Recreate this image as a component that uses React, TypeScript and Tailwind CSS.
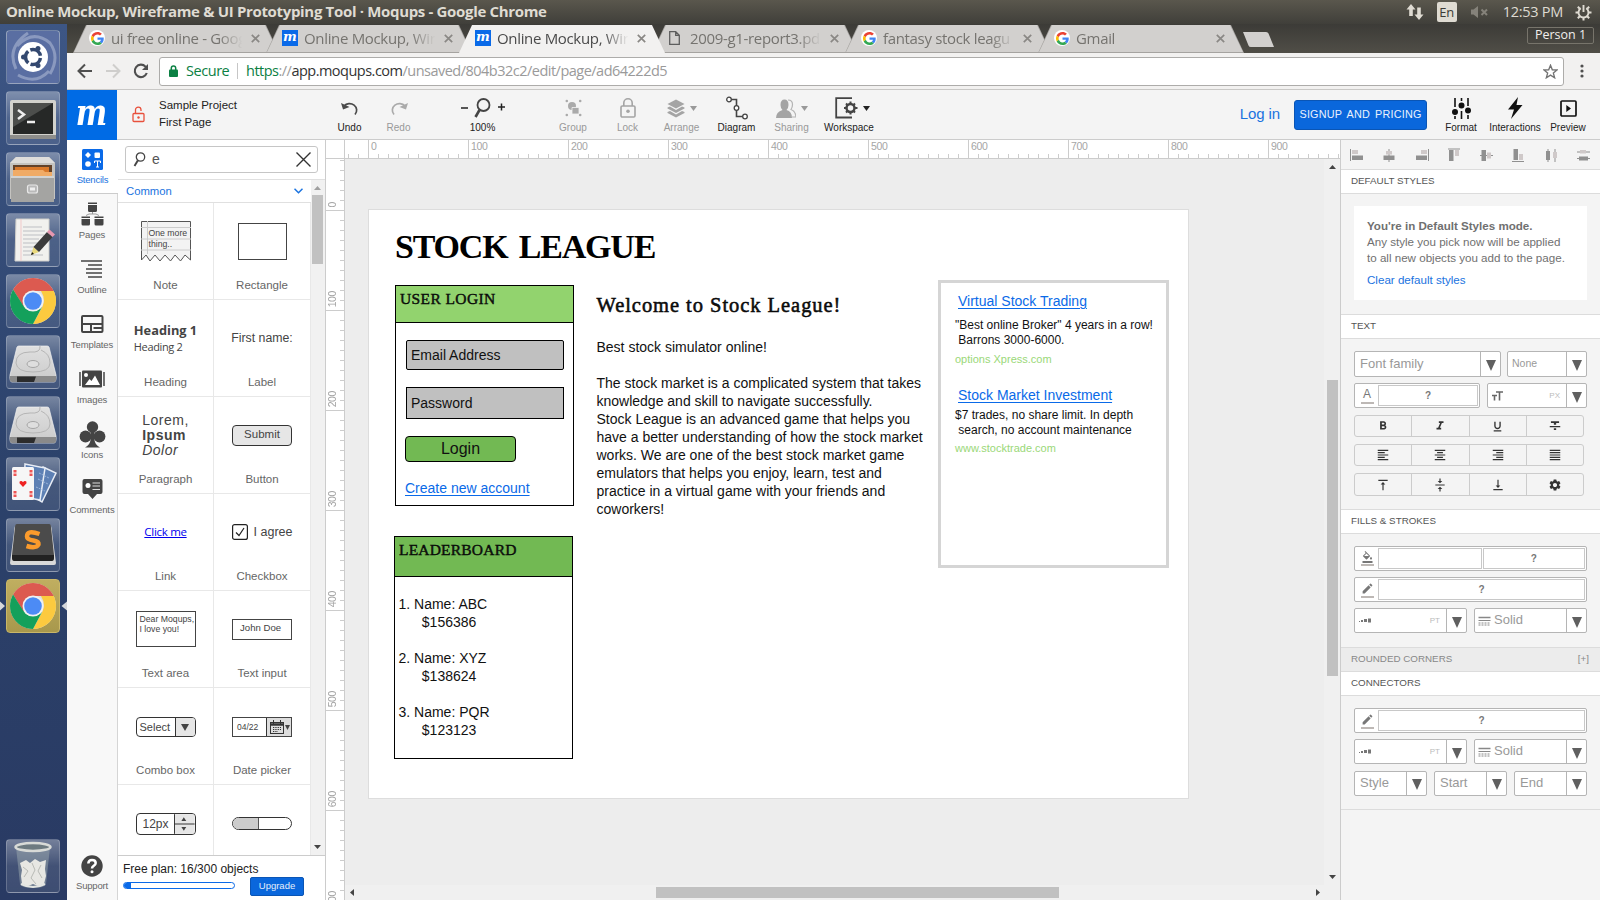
import React from "react";
import { MdSettings, MdFormatColorFill, MdEdit, MdVerticalAlignTop, MdVerticalAlignCenter, MdVerticalAlignBottom, MdFormatAlignLeft, MdFormatAlignCenter, MdFormatAlignRight, MdFormatAlignJustify, MdFormatBold, MdFormatItalic, MdFormatUnderlined, MdFormatStrikethrough } from "react-icons/md";

const ubuntu = "font-['Open_Sans','Noto_Sans',sans-serif]";

/* ---------- Desktop chrome ---------- */

function TitleBar() {
  return (
    <div className={`flex h-6 shrink-0 items-center bg-linear-to-b from-[#5a574d] to-[#403f3a] pl-1.5 pr-2 text-[#dfdbd2] ${ubuntu}`}>
      <div className="grow whitespace-nowrap pb-px text-[15px] font-bold tracking-[-0.330px]">
        Online Mockup, Wireframe &amp; UI Prototyping Tool · Moqups - Google Chrome
      </div>
      <svg className="mr-[13px] h-[18px] w-[18px]" viewBox="0 0 18 18" fill="#dfdbd2">
        <path d="M5 1L0.500 6.500H3.200V13H6.800V6.500H9.500zM13 17L8.500 11.500H11.200V4.500H14.800V11.500H17.500z" />
      </svg>
      <div className="mr-[13px] flex h-5 w-5 items-center justify-center rounded-[2px] bg-[#dfdbd2] text-[13px] leading-none text-[#3c3b37]">En</div>
      <svg className="mr-[14px] h-4 w-[19px]" viewBox="0 0 19 16" fill="#85827a">
        <path d="M1 5.500H3.500L8 2V14L3.500 10.500H1z" />
        <path d="M11.500 5.500L17 11M17 5.500L11.500 11" stroke="#85827a" strokeWidth="2" />
      </svg>
      <div className="mr-3 whitespace-nowrap text-[14.500px] tracking-[-0.280px]">12:53 PM</div>
      <svg className="h-[17px] w-[17px]" viewBox="0 0 17 17" fill="none" stroke="#dfdbd2">
        <path d="M5.800 4.300A5 5 0 1 0 11.200 4.300" strokeWidth="1.900" />
        <path d="M8.500 1V8" strokeWidth="1.900" />
        <path d="M2.800 2.800l2 2M14.200 2.800l-2 2M0.500 8.500H3.500M13.500 8.500h3M2.800 14.200l2-2M14.200 14.200l-2-2M8.500 13.500v3" strokeWidth="2" />
      </svg>
    </div>
  );
}

function Tile({ children, active }: { children: React.ReactNode; active?: boolean }) {
  return (
    <div className={`flex h-[54px] w-[54px] shrink-0 items-center justify-center rounded-[4px] border ${active ? "border-[#c9b768] bg-linear-to-b from-[#c0ae60] to-[#a8984c]" : "border-white/20 bg-linear-to-b from-white/35 via-white/12 to-white/10"}`}>
      {children}
    </div>
  );
}

function ChromeLogo() {
  return (
    <svg className="h-[48px] w-[48px]" viewBox="0 0 48 48">
      <circle cx="24" cy="24" r="23" fill="#e0e0e0" />
      <path d="M4.100 12.500A23 23 0 0 1 43.900 12.500L44.700 14H24L14.500 29.500z" fill="#dc5a50" />
      <path d="M44.700 14A23 23 0 0 1 24 47L33.500 29.500Q37 22 32 14z" fill="#fcca3f" />
      <path d="M4.100 12.500A23 23 0 0 0 24 47L33 30Q28 35.500 20 33.500Q16 32 14.500 29z" fill="#14a05b" />
      <circle cx="24" cy="24" r="10.500" fill="#f1f1f1" />
      <circle cx="24" cy="24" r="8.800" fill="#4c8bf5" />
    </svg>
  );
}

function DriveIcon() {
  return (
    <svg className="h-[48px] w-[50px]" viewBox="0 0 50 48">
      <defs>
        <linearGradient id="drive" x1="0" y1="0" x2="0" y2="1">
          <stop offset="0" stopColor="#e0e0e0" />
          <stop offset="1" stopColor="#cacaca" />
        </linearGradient>
      </defs>
      <path d="M9 9Q9.500 8 11 8H39Q40.500 8 41 9L48 37Q48.500 44 46 44H4Q1.500 44 2 37z" fill="url(#drive)" stroke="#f2f2f2" strokeWidth="0.700" />
      <path d="M2 38H48V42Q48 44 46 44H4Q2 44 2 42z" fill="#8a8a8a" />
      <path d="M9 38.500H28L26 44H9z" fill="#2c2c2c" />
      <path d="M32 8Q33 15 22 14Q8 14 8 25Q9 34 25 34Q42 34 42 25Q42 16 33 12" fill="none" stroke="#b5b5b5" />
      <ellipse cx="25" cy="26" rx="6" ry="3.500" fill="#dedede" stroke="#a5a5a5" />
    </svg>
  );
}

function Launcher() {
  return (
    <div className="relative flex w-[67px] shrink-0 flex-col gap-[7px] bg-linear-to-b from-[#3d5685] via-[#2c426b] to-[#293a63] pl-[6px] pt-1.5">
      <Tile>
        <svg className="h-[52px] w-[52px]" viewBox="0 0 52 52">
          <rect width="52" height="52" rx="3" fill="#5a6ea2" />
          <path d="M10 15Q26-2 43 12Q53 26 43 43M9 38Q-1 17 21 2M42 40Q29 54 11 44" fill="none" stroke="#b9c4dc" strokeWidth="3" opacity=".5" />
          <circle cx="26" cy="26" r="15" fill="#fff" />
          <circle cx="26" cy="26" r="7.500" fill="none" stroke="#33486f" strokeWidth="3.500" strokeDasharray="13.200 2.500" strokeDashoffset="-1" />
          <circle cx="16.500" cy="26" r="2.500" fill="#33486f" />
          <circle cx="31" cy="17.500" r="2.500" fill="#33486f" />
          <circle cx="31" cy="34.500" r="2.500" fill="#33486f" />
        </svg>
      </Tile>
      <Tile>
        <svg className="h-[46px] w-[48px]" viewBox="0 0 48 46">
          <rect x="1" y="5" width="46" height="39" rx="2" fill="#d2d2cd" />
          <rect x="1" y="40" width="46" height="4" fill="#8e8e8b" />
          <rect x="4" y="8" width="40" height="31" fill="#262827" />
          <path d="M4 8H44L4 32z" fill="#4c4e4c" />
          <path d="M9 15l6 4.500L9 24M18 27h8" fill="none" stroke="#eee" strokeWidth="2.500" />
        </svg>
      </Tile>
      <Tile>
        <svg className="h-[50px] w-[48px]" viewBox="0 0 48 50">
          <path d="M7 3H40L46 9V45H1V9z" fill="#c4c3c0" />
          <path d="M7 3H40L46 9H1z" fill="#dedddb" />
          <path d="M4 11H43V24H4z" fill="#62422a" />
          <path d="M6 13H40V24H6z" fill="#d9792b" />
          <path d="M4 16h30l2 2h7v6H4z" fill="#f0ab66" />
          <path d="M2 22H45V48H2z" fill="#a4a4a2" />
          <path d="M2 22H45V24H2z" fill="#d3d3d1" />
          <rect x="18.500" y="31" width="10" height="8" rx="2" fill="#b9b9b9" stroke="#e8e8e8" strokeWidth="1.200" />
          <rect x="21" y="33.500" width="5" height="3" fill="#eee" />
        </svg>
      </Tile>
      <Tile>
        <svg className="h-[50px] w-[48px]" viewBox="0 0 48 50">
          <path d="M7 4H40V46H6z" fill="#f1f1ee" stroke="#cfcfcb" />
          <path d="M12 4V46" stroke="#f1c9c9" />
          <path d="M14 12H33M14 16H36M14 20H35M14 24H30M14 28H33M14 32H26M14 36H28M14 40H34" stroke="#bdbfc3" />
          <path d="M22 40l2.500-8 5.500 5z" fill="#e9d97c" />
          <path d="M24.500 32L38 17l5.500 5L30 37z" fill="#3b3b3b" />
          <path d="M38 17l2.500-2.500 5.500 5L43.500 22z" fill="#e797b0" />
          <path d="M22 40l1-3 2 2z" fill="#111" />
        </svg>
      </Tile>
      <Tile><ChromeLogo /></Tile>
      <Tile><DriveIcon /></Tile>
      <Tile><DriveIcon /></Tile>
      <Tile>
        <svg className="h-[50px] w-[48px]" viewBox="0 0 48 50">
          <g stroke="#e8edf5" strokeWidth="1.500" fill="#5d80b4">
            <path d="M34 8l13 6-14 29-12-7z" />
            <path d="M16 5l20 4-5 32-16-3z" />
          </g>
          <path d="M30 14l10 5M29 20l10 5M27 28l9 4" stroke="#9bb5da" strokeDasharray="2 1" />
          <rect x="3" y="8" width="22" height="33" rx="1.500" fill="#f6f6f6" />
          <path d="M14 28l-3.500-3.700q-.5-2.700 2-2.300l1.500 1 1.500-1q2.500-.4 2 2.300z" fill="#e22" />
          <path d="M6 11v6M22 11v6M6 32v6M22 32v6" stroke="#e55" strokeWidth="3" strokeDasharray="2.500 1" />
        </svg>
      </Tile>
      <Tile>
        <svg className="h-[50px] w-[50px]" viewBox="0 0 50 50">
          <path d="M6 12Q6 5 9 5H41Q44 5 44 12L48 43Q48 45 46 45H4Q2 45 2 43z" fill="#d9d9d9" />
          <path d="M9 4H41Q43 4 43 7L46 35Q46 40 44 40H6Q4 40 4 35L7 7Q7 4 9 4z" fill="#4b4b4b" />
          <path d="M4 35H46V38Q46 41 44 41H6Q4 41 4 38z" fill="#222" />
          <path d="M31.500 14Q19 9.500 19 16.500Q19 19.500 25.500 20.500Q31 21.500 30.500 24.500Q28 29 18.500 26" fill="none" stroke="#fb9b2c" strokeWidth="4.500" />
        </svg>
      </Tile>
      <Tile active><ChromeLogo /></Tile>
      <div className="mt-auto pb-[7px]">
        <Tile>
          <svg className="h-[50px] w-[40px]" viewBox="0 0 40 50">
            <path d="M3 6L7 43Q8 47 20 47Q32 47 33 43L37 6z" fill="#9aa8ad" opacity=".5" />
            <path d="M7 22l6-3 4 3 5-4 5 3 6-2-1 9 1 7-2 8-6 2-5-2-5 2-6-2-1-8 1-6z" fill="#e7e7e3" />
            <path d="M10 26l5 4-4 6M19 22l3 7-4 8 5 6M28 24l-3 6 4 7" fill="none" stroke="#b8bab5" />
            <ellipse cx="20" cy="6" rx="17.500" ry="4" fill="#6d7a80" stroke="#d8dad7" strokeWidth="2.500" />
            <path d="M8 43Q20 49 32 43" fill="none" stroke="#e4e6e2" strokeWidth="2" />
          </svg>
        </Tile>
      </div>
      <svg className="absolute left-0 top-[577px] h-[10px] w-[67px]" viewBox="0 0 67 10" fill="#d5d7da">
        <path d="M0 0.500L5 5L0 9.500zM67 0.500L61.500 5L67 9.500z" />
      </svg>
    </div>
  );
}

/* ---------- Browser ---------- */

function GoogleIcon() {
  return (
    <span className="flex h-4 w-4 shrink-0 items-center justify-center rounded-full bg-white">
      <svg className="h-[13px] w-[13px]" viewBox="0 0 48 48">
        <path fill="#EA4335" d="M24 9.500c3.540 0 6.710 1.220 9.210 3.600l6.850-6.850C35.900 2.380 30.470 0 24 0 14.620 0 6.510 5.380 2.560 13.220l7.980 6.190C12.430 13.720 17.740 9.500 24 9.500z" />
        <path fill="#4285F4" d="M46.980 24.550c0-1.570-.15-3.090-.38-4.550H24v9.020h12.940c-.58 2.960-2.260 5.480-4.780 7.180l7.730 6c4.510-4.180 7.090-10.360 7.090-17.650z" />
        <path fill="#FBBC05" d="M10.530 28.590c-.48-1.450-.76-2.990-.76-4.590s.27-3.140.76-4.590l-7.980-6.190C.92 16.460 0 20.120 0 24c0 3.880.92 7.540 2.560 10.780l7.970-6.190z" />
        <path fill="#34A853" d="M24 48c6.480 0 11.930-2.130 15.890-5.810l-7.730-6c-2.150 1.450-4.920 2.300-8.160 2.300-6.260 0-11.570-4.220-13.470-9.910l-7.980 6.190C6.510 42.620 14.620 48 24 48z" />
      </svg>
    </span>
  );
}

function MoqupsIcon() {
  return (
    <span className="flex h-4 w-4 shrink-0 items-center justify-center bg-[#0a6ae8] pb-[3px] font-['DejaVu_Serif',serif] text-[13px] font-bold italic leading-none text-white">m</span>
  );
}

function FileIcon() {
  return (
    <svg className="h-4 w-4 shrink-0" viewBox="0 0 16 16" fill="none" stroke="#5d5d5d" strokeWidth="1.300">
      <path d="M1.700 1.700h6l3.600 3.600v9H1.700zM7.700 1.700v3.600h3.600" />
    </svg>
  );
}

const tabs = [
  { icon: <GoogleIcon />, label: "ui free online - Goog" },
  { icon: <MoqupsIcon />, label: "Online Mockup, Wir" },
  { icon: <MoqupsIcon />, label: "Online Mockup, Wir", active: true },
  { icon: <FileIcon />, label: "2009-g1-report3.pd" },
  { icon: <GoogleIcon />, label: "fantasy stock leagu" },
  { icon: <GoogleIcon />, label: "Gmail" },
];

function TabStrip() {
  return (
    <div className={`flex h-[29px] shrink-0 items-end bg-linear-to-b from-[#3c3b37] to-[#504e47] pl-1.5 ${ubuntu}`}>
      {tabs.map((t, i) => (
        <div
          key={i}
          className={`-mr-[13px] h-7 w-[206px] shrink-0 [clip-path:polygon(13px_0,193px_0,206px_100%,0_100%)] ${t.active ? "relative z-10 bg-[#f2f1f0] text-[#4a4a4a]" : "bg-[#a5a3a0] pb-px text-[#75736f]"}`}
        >
          <div className={`flex h-full items-center pl-4 [clip-path:polygon(14px_0,192px_0,205px_100%,1px_100%)] ${t.active ? "bg-[#f2f1f0] pb-[2px]" : "bg-[#d2d0ce] pb-px"}`}>
            {t.icon}
            <div className="ml-1.5 w-[134px] overflow-hidden whitespace-nowrap text-[15px] leading-6 tracking-[-0.330px] [mask-image:linear-gradient(to_right,black_80%,transparent_98%)]">{t.label}</div>
            <svg className="ml-1.5 h-[9px] w-[9px]" viewBox="0 0 9 9" stroke="#8a8885" strokeWidth="1.700">
              <path d="M0.800 0.800L8.200 8.200M8.200 0.800L0.800 8.200" />
            </svg>
          </div>
        </div>
      ))}
      <svg className="mb-[6px] ml-[11px] h-[15px] w-[33px]" viewBox="0 0 33 15">
        <path d="M1 0H24Q26 0 26.500 1.500L32 15H9Q7 15 6.500 13.500z" fill="#d2d0ce" />
      </svg>
      <div className="ml-auto mr-1.5 mt-[3px] flex h-[17px] w-[67px] items-center justify-center self-start rounded-[2px] border border-[#77746b] text-[12.500px] leading-none text-[#f0efec]">Person 1</div>
    </div>
  );
}

function AddressBar() {
  return (
    <div className={`flex h-[37px] shrink-0 items-center border-b border-[#c9c8c6] bg-[#f2f1f0] ${ubuntu}`}>
      <svg className="ml-[10px] h-4 w-[16px]" viewBox="0 0 16 16" fill="none" stroke="#4f4f4f" strokeWidth="2">
        <path d="M15 8H2M8 1.500L1.500 8L8 14.500" />
      </svg>
      <svg className="ml-[12px] h-4 w-[16px]" viewBox="0 0 16 16" fill="none" stroke="#cfcecc" strokeWidth="2">
        <path d="M1 8H14M8 1.500L14.500 8L8 14.500" />
      </svg>
      <svg className="ml-[12px] h-4 w-4" viewBox="0 0 16 16" fill="none" stroke="#4f4f4f" strokeWidth="2.100">
        <path d="M13.800 10A6.200 6.200 0 1 1 12.500 3.600L14 5" />
        <path d="M9 7H15V1z" fill="#4f4f4f" stroke="none" />
      </svg>
      <div className="ml-[10px] flex h-[29px] w-[1405px] items-center rounded-[3px] border border-[#adacaa] bg-white">
        <svg className="ml-[9px] h-3 w-[9px]" viewBox="0 0 9 12">
          <path d="M2.300 5V3.200a2.200 2.200 0 0 1 4.400 0V5" fill="none" stroke="#0b8043" strokeWidth="1.500" />
          <rect y="4.500" width="9" height="7.500" rx="1" fill="#0b8043" />
        </svg>
        <span className="ml-[8px] w-[43px] whitespace-nowrap text-[14.500px] tracking-[-0.450px] text-[#0b8043]">Secure</span>
        <span className="ml-2 h-4 w-px bg-[#c6c6c6]" />
        <span className="ml-[8px] whitespace-nowrap text-[14.500px] tracking-[-0.510px] text-[#9a9a9a]">
          <span className="text-[#0b8043]">https</span>://<span className="text-[#333]">app.moqups.com</span>/unsaved/804b32c2/edit/page/ad64222d5
        </span>
        <svg className="ml-auto mr-[5px] h-[15px] w-[15px]" viewBox="0 0 24 24" fill="none" stroke="#737373" strokeWidth="2.200">
          <path d="M12 2l2.900 7.200 7.600.4-5.900 4.900 2 7.500L12 17.800 5.400 22l2-7.500L1.500 9.600l7.600-.4z" />
        </svg>
      </div>
      <svg className="ml-[16px] h-[14px] w-1" viewBox="0 0 4 14" fill="#4f4f4f">
        <circle cx="2" cy="2" r="1.600" /><circle cx="2" cy="7" r="1.600" /><circle cx="2" cy="12" r="1.600" />
      </svg>
    </div>
  );
}

/* ---------- Application toolbar ---------- */

function Tool({ label, w, dim, children }: { label: string; w: string; dim?: boolean; children: React.ReactNode }) {
  return (
    <div className={`flex ${w} shrink-0 flex-col items-center whitespace-nowrap text-[10px] ${dim ? "text-[#999]" : "text-[#222]"}`}>
      <div className="flex h-[24px] shrink-0 items-center">{children}</div>
      <div className="mt-[2px] leading-[12px]">{label}</div>
    </div>
  );
}

const Caret = () => (
  <svg className="ml-[5px] h-[5px] w-[7px]" viewBox="0 0 7 5" fill="currentColor"><path d="M0 0H7L3.500 5z" /></svg>
);

function AppToolbar() {
  return (
    <div className="flex h-[50px] shrink-0 border-b border-[#ccc] bg-[#f4f4f4]">
      <div className="flex h-[50px] w-[50px] items-center justify-center bg-[#006be5] pb-[6px] font-['DejaVu_Serif',serif] text-[35px] font-bold italic leading-none text-white">
        <span className="scale-x-[.85]">m</span>
      </div>
      <svg className="ml-[15px] mt-[16px] h-[17px] w-[13px]" viewBox="0 0 13 17" fill="none" stroke="#e8503c" strokeWidth="1.300">
        <rect x="1" y="7.500" width="11" height="8" rx="1" />
        <path d="M3.500 7.500V3.800a2.700 2.700 0 0 1 5.500 0V5" />
        <circle cx="6.500" cy="11.500" r="1.200" fill="#e8503c" stroke="none" />
      </svg>
      <div className="ml-[14px] mt-[7px] w-[166px] text-[11.500px] leading-[17px] text-[#222]">
        <div>Sample Project</div>
        <div>First Page</div>
      </div>
      <div className="flex pt-[6px]">
        <Tool label="Undo" w="w-[49px]">
          <svg className="h-[16px] w-[18px]" viewBox="0 0 18 16" fill="none" stroke="#4a4a4a" strokeWidth="1.700">
            <path d="M3 6A7 6.500 0 1 1 14 14.500" />
            <path d="M0 3L2 9.500L8.500 7z" fill="#4a4a4a" stroke="none" />
          </svg>
        </Tool>
        <Tool label="Redo" w="w-[49px]" dim>
          <svg className="h-[16px] w-[18px]" viewBox="0 0 18 16" fill="none" stroke="#aaa" strokeWidth="1.700">
            <path d="M15 6A7 6.500 0 1 0 4 14.500" />
            <path d="M18 3L16 9.500L9.500 7z" fill="#aaa" stroke="none" />
          </svg>
        </Tool>
        <Tool label="100%" w="w-[119px]">
          <svg className="h-[22px] w-[46px]" viewBox="0 0 46 22" fill="none" stroke="#444" strokeWidth="1.500">
            <path d="M1 11H8M38 10H45M41.500 6.500V13.500" stroke="#222" />
            <circle cx="23.500" cy="8" r="6" strokeWidth="1.800" />
            <path d="M19.500 13L15.500 20" strokeWidth="2.600" />
          </svg>
        </Tool>
        <Tool label="Group" w="w-[62px]" dim>
          <svg className="h-[18px] w-[17px]" viewBox="0 0 17 18" fill="#aaa">
            <circle cx="1.800" cy="2" r="1.300" /><circle cx="15.200" cy="2" r="1.300" /><circle cx="1.800" cy="16" r="1.300" /><circle cx="15.200" cy="16" r="1.300" />
            <circle cx="7" cy="7" r="4" /><path d="M7 8.500h7v6.500h-7z" stroke="#f4f4f4" strokeWidth="0.800" />
          </svg>
        </Tool>
        <Tool label="Lock" w="w-[47px]" dim>
          <svg className="h-[20px] w-[16px]" viewBox="0 0 16 20" fill="none" stroke="#a4a4a4" strokeWidth="1.600">
            <rect x="1" y="8" width="14" height="11" rx="1.300" />
            <path d="M3.800 8V5a4.200 4.200 0 0 1 8.400 0V8" />
            <circle cx="8" cy="13.300" r="1.800" fill="#a4a4a4" stroke="none" />
          </svg>
        </Tool>
        <Tool label="Arrange" w="w-[61px]" dim>
          <svg className="h-[19px] w-[18px]" viewBox="0 0 18 19" fill="#a4a4a4">
            <path d="M9 0.500L17.500 5L9 9.500L0.500 5z" />
            <path d="M0.500 8.500L3 7.500L9 11L15 7.500L17.500 8.500V9.500L9 14L0.500 9.500zM0.500 13L3 12L9 15.500L15 12L17.500 13V14L9 18.500L0.500 14z" />
          </svg>
          <Caret />
        </Tool>
        <Tool label="Diagram" w="w-[49px]">
          <svg className="h-[24px] w-[24px]" viewBox="0 0 24 24" fill="none" stroke="#444" strokeWidth="1.600">
            <path d="M5 3.500H11.500V20.500H18" />
            <g fill="#fff" strokeWidth="1.300"><circle cx="4" cy="3.500" r="2.300" /><circle cx="11.500" cy="12" r="2.300" /><circle cx="20" cy="20.500" r="2.300" /></g>
          </svg>
        </Tool>
        <Tool label="Sharing" w="w-[61px]" dim>
          <svg className="h-[19px] w-[20px]" viewBox="0 0 20 19" fill="#a4a4a4">
            <path d="M12 1q4.500 0 4.500 4.500 0 3-1.500 5 4.500 1.500 5 7.500H16" fill="none" stroke="#b4b4b4" strokeWidth="1.200" />
            <path d="M8.500 0.500q4 0 4 5.500 0 3-2 5 5.500 1.500 5.500 8H0q0-6 6.500-8-2-2-2-5 0-5.500 4-5.500z" />
          </svg>
          <Caret />
        </Tool>
        <Tool label="Workspace" w="w-[54px]">
          <svg className="ml-[6px] h-[22px] w-[23px]" viewBox="0 0 23 22" fill="none" stroke="#444" strokeWidth="1.800">
            <path d="M17 1.200H1.200V20.500H17" />
            <circle cx="15.500" cy="11" r="4" strokeWidth="2.500" />
            <path d="M15.500 4.500V7M15.500 15V17.500M9 11h2M20 11h2.500M11 6.500l1.500 1.500M20 6.500L18.500 8M11 15.500L12.500 14M20 15.500L18.500 14" strokeWidth="2" />
          </svg>
          <Caret />
        </Tool>
      </div>
      <div className="ml-auto flex items-center">
        <div className="mr-[14px] text-[15px] tracking-[-0.100px] text-[#1a73e0]">Log in</div>
        <div className="mr-[11px] flex h-[30px] w-[133px] items-center justify-center whitespace-nowrap rounded-[3px] border border-[#0a55b5] bg-[#0a67dc] text-[10.800px] tracking-[0.200px] text-[#eaf2fd] [word-spacing:2px]">SIGNUP AND PRICING</div>
      </div>
      <div className="mr-[10px] flex pt-[6px] text-black">
        <Tool label="Format" w="w-[46px]">
          <svg className="h-[21px] w-[19px]" viewBox="0 0 19 21" stroke="#111" strokeWidth="1.600" fill="#111">
            <path d="M3 0V9M3 18V21M9.500 0V3M9.500 13V21M16 0V8M16 17V21" />
            <circle cx="3" cy="14" r="2.200" /><circle cx="9.500" cy="7.500" r="2.200" /><circle cx="16" cy="12.500" r="2.200" />
          </svg>
        </Tool>
        <Tool label="Interactions" w="w-[62px]">
          <svg className="h-[22px] w-[16px]" viewBox="0 0 16 22" fill="#111"><path d="M11 0L1 12.500H7L4 22L15.500 8H9.500z" /></svg>
        </Tool>
        <Tool label="Preview" w="w-[44px]">
          <svg className="h-[17px] w-[17px]" viewBox="0 0 17 17" fill="none" stroke="#111" strokeWidth="1.700">
            <rect x="1" y="1" width="15" height="15" rx="1" />
            <path d="M6.300 5L11 8.500L6.300 12z" fill="#111" stroke="none" />
          </svg>
        </Tool>
      </div>
    </div>
  );
}

/* ---------- Left navigation and stencils ---------- */

function NavItem({ label, children }: { label: string; children: React.ReactNode }) {
  return (
    <div className="flex h-[55px] shrink-0 flex-col items-center">
      <div className="flex h-[42px] shrink-0 items-center pt-[12px]">{children}</div>
      <div className="text-[9.500px] leading-[12px] tracking-[-0.100px] text-[#666]">{label}</div>
    </div>
  );
}

function SideNav() {
  return (
    <div className="flex w-[51px] shrink-0 flex-col">
      <div className="flex h-[54px] shrink-0 flex-col items-center border-b border-[#ccc] bg-white pt-[9px]">
        <svg className="mr-px h-[21px] w-[21px]" viewBox="0 0 21 21">
          <rect width="21" height="21" rx="1.500" fill="#0a6ae8" />
          <path d="M6 3L9 6L6 9L3 6z" fill="#fff" />
          <rect x="12.500" y="3.500" width="5.500" height="5.500" rx="1" fill="#fff" />
          <circle cx="6" cy="15" r="2.800" fill="#fff" />
          <path d="M12.500 14V12H18.500V14M15.500 12V18M14 18H17" fill="none" stroke="#fff" />
        </svg>
        <div className="mt-[4px] text-[9.500px] leading-[12px] tracking-[-0.200px] text-[#1a73e0]">Stencils</div>
      </div>
      <div className="flex grow flex-col border-r border-[#d5d5d5] bg-[#f8f8f8]">
        <div className="-mt-[7px]" />
        <NavItem label="Pages">
          <svg className="h-[24px] w-[23px]" viewBox="0 0 23 24" fill="#444">
            <path d="M7 0.500H16V2H7zM7 3H16V8.500Q16 10 14.500 10H8.500Q7 10 7 8.500zM0.500 14.500H9V16H0.500zM0.500 17H9V22Q9 23.500 7.500 23.500H2Q0.500 23.500 0.500 22zM13.500 14.500H22.500V16H13.500zM13.500 17H22.500V22Q22.500 23.500 21 23.500H15Q13.500 23.500 13.500 22z" />
            <path d="M11.500 10V12M5 13.500L8 12H15L18 13.500" stroke="#999" fill="none" />
          </svg>
        </NavItem>
        <NavItem label="Outline">
          <svg className="h-[18px] w-[22px]" viewBox="0 0 22 18" stroke="#444" strokeWidth="1.700">
            <path d="M0 1H21M7 5H21M5 9H21M5 13H21M7 17H21" />
          </svg>
        </NavItem>
        <NavItem label="Templates">
          <svg className="h-[18px] w-[23px]" viewBox="0 0 23 18" fill="none" stroke="#444" strokeWidth="2">
            <rect x="1" y="1" width="20.500" height="16" rx="1" /><path d="M1 9H21.500M10 9V17M12.500 13H21.500" />
          </svg>
        </NavItem>
        <NavItem label="Images">
          <svg className="h-[18px] w-[26px]" viewBox="0 0 26 18" fill="#444">
            <rect x="3" y="0.500" width="20" height="17" rx="1" /><path d="M1 2V16M25 2V16" stroke="#444" strokeWidth="1.500" />
            <circle cx="7" cy="5" r="2" fill="#fff" /><path d="M6 15L10.500 9L12.500 11L16 5.500L21 15z" fill="#fff" />
          </svg>
        </NavItem>
        <NavItem label="Icons">
          <svg className="h-[27px] w-[27px]" viewBox="0 0 27 27" fill="#444">
            <circle cx="13.500" cy="6" r="5.700" /><circle cx="6.500" cy="15.500" r="5.900" /><circle cx="20.500" cy="15.500" r="5.900" />
            <path d="M11.500 9H15.500V19Q16 24 21 26.500H6Q11 24 11.500 19z" />
          </svg>
        </NavItem>
        <NavItem label="Comments">
          <svg className="h-[20px] w-[21px]" viewBox="0 0 21 20" fill="#444">
            <path d="M2.500 0H18.500Q20.500 0 20.500 2V13Q20.500 15 18.500 15H15L10.500 20L6 15H2.500Q0.500 15 0.500 13V2Q0.500 0 2.500 0z" />
            <circle cx="6" cy="6.500" r="2.500" fill="#fff" /><path d="M10.500 4H18M10.500 7H18M10.500 10.500H18" stroke="#ddd" strokeWidth="1.200" />
          </svg>
        </NavItem>
        <div className="mt-auto flex flex-col items-center pb-[8px]">
          <svg className="h-[22px] w-[22px]" viewBox="0 0 22 22">
            <circle cx="11" cy="11" r="10.700" fill="#444" />
            <path d="M7.300 8.500Q7.500 5 11 5Q14.700 5 14.700 8Q14.700 10 12.500 11Q11 12 11 13.500" fill="none" stroke="#fff" strokeWidth="2.500" />
            <circle cx="11" cy="16.700" r="1.500" fill="#fff" />
          </svg>
          <div className="mt-[3px] text-[9.500px] leading-[12px] tracking-[-0.200px] text-[#666]">Support</div>
        </div>
      </div>
    </div>
  );
}

function Stencil({ label, children }: { label: string; children: React.ReactNode }) {
  return (
    <div className="flex h-[97px] w-full flex-col items-center border-b border-r border-[#e8e8e8] text-[#444]">
      <div className="flex h-[76px] items-center">{children}</div>
      <div className="text-[11.500px] leading-[13px] text-[#666]">{label}</div>
    </div>
  );
}

function Stencils() {
  return (
    <div className="flex w-[208px] shrink-0 flex-col border-r border-[#ccc] bg-white">
      <div className="flex h-[39px] shrink-0 items-start pl-[7px] pt-[6px]">
        <div className="flex h-[27px] w-[193px] items-center rounded-[3px] border border-[#c6c6c6] bg-white">
          <svg className="ml-[7px] h-[15px] w-[13px]" viewBox="0 0 13 15" fill="none" stroke="#444" strokeWidth="1.300">
            <circle cx="7.500" cy="5" r="4.200" /><path d="M4.800 8.500L1.500 14" strokeWidth="1.900" />
          </svg>
          <span className="ml-[6px] text-[14px] text-[#555]">e</span>
          <svg className="ml-auto mr-[6px] h-[15px] w-[15px]" viewBox="0 0 15 15" stroke="#333" strokeWidth="1.400"><path d="M0.500 0.500L14.500 14.500M14.500 0.500L0.500 14.500" /></svg>
        </div>
      </div>
      <div className="flex min-h-0 grow border-t border-[#e0e0e0]">
        <div className="min-h-0 w-[193px] overflow-hidden">
          <div className="flex h-[23px] items-center justify-between border-b border-[#e0e0e0] pl-[8px] pr-[8px] text-[11.300px] text-[#1a73e0]">
            Common
            <svg className="h-[6px] w-[9px]" viewBox="0 0 9 6" fill="none" stroke="#1a73e0" strokeWidth="1.500"><path d="M0.500 0.800L4.500 4.800L8.500 0.800" /></svg>
          </div>
          <div className="grid w-[193px] grid-cols-[96px_97px]">
            <Stencil label="Note">
              <svg className="-mr-[50px] h-[40px] w-[50px]" viewBox="0 0 50 40" fill="none" stroke="#999">
                <path d="M0.500 0.500H49.500V39L44 34L39.500 40L34 34L29.500 40L24 34L19 40L14 34L9 40L5 34L0.500 39z" stroke="#555" fill="#f3f3f3" />
                <path d="M0 6.500H50M0 18H50M0 29H50M6.500 0V33" stroke="#ccc" />
              </svg>
              <div className="relative w-[50px] whitespace-nowrap pb-[4px] pl-[8px] text-[8.700px] leading-[11px]">One more<br />thing..</div>
            </Stencil>
            <Stencil label="Rectangle"><div className="h-[37px] w-[49px] border border-[#444]" /></Stencil>
            <Stencil label="Heading">
              <div className={`whitespace-nowrap ${ubuntu}`}>
                <div className="text-[12.800px] font-bold leading-[16px]">Heading 1</div>
                <div className="text-[11px] leading-[17px] tracking-[-0.350px]">Heading 2</div>
              </div>
            </Stencil>
            <Stencil label="Label"><span className="whitespace-nowrap text-[12.300px]">First name:</span></Stencil>
            <Stencil label="Paragraph">
              <div className="text-[14px] leading-[15px] tracking-[0.500px]">Lorem,<br /><b>Ipsum</b><br /><i>Dolor</i></div>
            </Stencil>
            <Stencil label="Button"><div className="flex h-[21px] w-[60px] items-center justify-center rounded-[4px] border border-[#333] bg-[#e6e6e6] text-[11.500px]">Submit</div></Stencil>
            <Stencil label="Link"><span className={`text-[11.500px] tracking-[-0.300px] text-[#0000ee] underline ${ubuntu}`}>Click me</span></Stencil>
            <Stencil label="Checkbox">
              <svg className="h-[16px] w-[16px]" viewBox="0 0 16 16" fill="none" stroke="#222" strokeWidth="1.200"><rect x="0.600" y="0.600" width="14.800" height="14.800" rx="2" /><path d="M4 8.500L7 11.500L12 4" /></svg>
              <span className="ml-[6px] whitespace-nowrap text-[12.500px]">I agree</span>
            </Stencil>
            <Stencil label="Text area"><div className="h-[36px] w-[60px] whitespace-nowrap border border-[#444] pl-[3px] pt-[2px] text-[8.700px] leading-[10px]">Dear Moqups,<br />I love you!</div></Stencil>
            <Stencil label="Text input"><div className="flex h-[21px] w-[60px] items-center border border-[#444] pb-px pl-[7px] text-[9.600px]">John Doe</div></Stencil>
            <Stencil label="Combo box">
              <div className="mt-[2px] flex h-[20px] w-[60px] overflow-hidden rounded-[4px] border border-[#333] text-[11px] leading-[18px]">
                <div className="w-[38px] pl-[3px]">Select</div>
                <div className="flex grow items-center justify-center border-l border-[#333] bg-[#e6e6e6]"><svg className="h-[7px] w-[8px]" viewBox="0 0 8 7"><path d="M0 0H8L4 7z" fill="#444" /></svg></div>
              </div>
            </Stencil>
            <Stencil label="Date picker">
              <div className="mt-[2px] flex h-[20px] w-[60px] border border-[#444] text-[8.500px] leading-[18px]">
                <div className="w-[33px] pl-[4px]">04/22</div>
                <div className="flex grow items-center gap-px border-l border-[#333] bg-[#ddd] pl-[3px]">
                  <svg className="h-[15px] w-[14px]" viewBox="0 0 14 15" fill="none" stroke="#333"><rect x="0.500" y="2.500" width="13" height="11" /><path d="M0.500 4.500H13.500" strokeWidth="2.500" /><path d="M3.500 0V4M10.500 0V4" /><path d="M3 7.500H11M3 9.500H11M3 11.500H8" strokeDasharray="1.300 1" /></svg>
                  <svg className="h-[5px] w-[5px]" viewBox="0 0 5 5"><path d="M0 0H5L2.500 5z" fill="#444" /></svg>
                </div>
              </div>
            </Stencil>
            <Stencil label="">
              <div className="mt-[2px] flex h-[22px] w-[60px] overflow-hidden rounded-[4px] border border-[#333] text-[12px] leading-[20px]">
                <div className="w-[38px] pl-[6px]">12px</div>
                <svg className="h-[20px] w-[21px]" viewBox="0 0 21 20"><rect width="21" height="20" fill="#e6e6e6" /><path d="M0.500 0V20M0 10H21" stroke="#333" /><path d="M7.500 7L10 3L12.500 7zM7.500 13L10 17L12.500 13z" fill="#444" /></svg>
              </div>
            </Stencil>
            <Stencil label="">
              <div className="mt-px flex h-[13px] w-[60px] overflow-hidden rounded-full border border-[#333]"><div className="w-[26px] border-r border-[#555] bg-[#ccc]" /></div>
            </Stencil>
          </div>
        </div>
        <div className="flex w-[14px] flex-col items-center bg-[#f1f1f1] pb-[6px] pr-px pt-[6px]">
          <svg className="h-[4px] w-[7px]" viewBox="0 0 7 4"><path d="M0 4L3.500 0L7 4z" fill="#a0a0a0" /></svg>
          <div className="mt-[5px] h-[69px] w-[11px] bg-[#c1c1c1]" />
          <svg className="mt-auto h-[4px] w-[7px]" viewBox="0 0 7 4"><path d="M0 0L3.500 4L7 0z" fill="#444" /></svg>
        </div>
      </div>
      <div className="h-[45px] shrink-0 border-t border-[#ccc] pl-[5px] pt-[6px]">
        <div className="text-[12px] leading-[15px] text-[#222]">Free plan: 16/300 objects</div>
        <div className="flex items-start">
          <div className="mt-[5px] flex h-[7px] w-[112px] overflow-hidden rounded-full border border-[#0a6ae8]"><div className="w-[7px] bg-[#0a6ae8]" /></div>
          <div className="ml-[15px] flex h-[19px] w-[54px] items-center justify-center rounded-[2px] border border-[#0a55b5] bg-[#0a67dc] text-[9.500px] text-[#e4eefb]">Upgrade</div>
        </div>
      </div>
    </div>
  );
}

/* ---------- Canvas ---------- */

function HorizontalRuler() {
  return (
    <div className="flex h-[19px] shrink-0 overflow-hidden border-b border-[#ccc] bg-white text-[10.500px] leading-[13px] tracking-[-0.400px] text-[#a5a5a5]">
      <div className="flex h-[18px] w-[42px] shrink-0 items-end pl-[18px]">
        <div className="flex h-full w-px bg-[#ccc]" />
        <div className="h-[4px] w-[22px] bg-[repeating-linear-gradient(to_right,transparent_0_3px,#ccc_3px_4px,transparent_4px_10px)]" />
      </div>
      {[0, 100, 200, 300, 400, 500, 600, 700, 800, 900].map((n) => (
        <div key={n} className="flex h-[18px] w-[100px] shrink-0 flex-col justify-between border-l border-[#ccc]">
          <div className="pl-[2px]">{n}</div>
          <div className="h-[4px] bg-[repeating-linear-gradient(to_right,transparent_0_9px,#ccc_9px_10px)] [mask-image:linear-gradient(to_right,black_98px,transparent_98px)]" />
        </div>
      ))}
    </div>
  );
}

function VerticalRuler() {
  return (
    <div className="flex w-[19px] shrink-0 flex-col overflow-hidden border-r border-[#ccc] bg-white text-[10.500px] leading-[13px] tracking-[-0.400px] text-[#a5a5a5]">
      {[0, 100, 200, 300, 400, 500, 600, 700].map((n) => (
        <div key={n} className={`flex shrink-0 items-end justify-between border-b border-[#ccc] ${n === 0 ? "h-[52px]" : "h-[100px]"}`}>
          <div className="rotate-180 pt-[3px] [writing-mode:vertical-rl]">{n}</div>
          <div className="h-full w-[4px] bg-[repeating-linear-gradient(to_top,transparent_0_9px,#ccc_9px_10px)]" />
        </div>
      ))}
    </div>
  );
}

const serif = "font-['Liberation_Serif',serif]";

function Page() {
  return (
    <div className="absolute left-[23px] top-[50px] h-[590px] w-[821px] border border-[#ddd] bg-white text-[14px] leading-[18px] text-[#111]">
      <div className={`absolute left-[26px] top-[17px] whitespace-nowrap text-[34px] font-bold leading-[40px] tracking-[-1.200px] text-black [word-spacing:4px] ${serif}`}>STOCK LEAGUE</div>

      <div className="absolute left-[26px] top-[75px] h-[221px] w-[179px] border border-black">
        <div className={`h-[37px] border-b border-black bg-[#92d36e] pl-[4px] pt-[4px] text-[15.500px] tracking-[0.400px] [-webkit-text-stroke:0.4px_black] ${serif}`}>USER LOGIN</div>
        <div className="ml-[10px] mt-[17px] flex h-[30px] w-[158px] items-center rounded-[2px] border border-black bg-[#c0c0c0] pl-[4px]">Email Address</div>
        <div className="ml-[10px] mt-[17px] flex h-[32px] w-[158px] items-center border border-black bg-[#c0c0c0] pl-[4px]">Password</div>
        <div className="ml-[9px] mt-[17px] flex h-[26px] w-[111px] items-center justify-center rounded-[4px] border border-black bg-[#72b953] text-[16px]">Login</div>
        <div className="ml-[9px] mt-[17px] whitespace-nowrap text-[#0a6ae8] underline underline-offset-2">Create new account</div>
      </div>

      <div className="absolute left-[25px] top-[326px] h-[223px] w-[179px] border border-black">
        <div className={`h-[40px] border-b border-black bg-[#72b953] pl-[4px] pt-[4px] text-[15.500px] tracking-[0.200px] [-webkit-text-stroke:0.4px_black] ${serif}`}>LEADERBOARD</div>
        <div className="whitespace-pre pl-[3.500px] pt-[18px]">{"1. Name: ABC\n      $156386\n\n2. Name: XYZ\n      $138624\n\n3. Name: PQR\n      $123123"}</div>
      </div>

      <div className={`absolute left-[227.500px] top-[82px] whitespace-nowrap text-[20.500px] leading-[26px] tracking-[0.950px] [-webkit-text-stroke:0.5px_black] ${serif}`}>Welcome to Stock League!</div>
      <div className="absolute left-[227.500px] top-[128px] whitespace-pre">{"Best stock simulator online!\n\nThe stock market is a complicated system that takes\nknowledge and skill to navigate successfully.\nStock League is an advanced game that helps you\nhave a better understanding of how the stock market\nworks. We are one of the best stock market game\nemulators that helps you enjoy, learn, test and\npractice in a virtual game with your friends and\ncoworkers!"}</div>

      <div className="absolute left-[569px] top-[70px] h-[288px] w-[231px] whitespace-pre border-[3px] border-[#d5d5d5] pl-[14px] pt-[9px] text-[12px] leading-[15px]">
        <div className="pl-[3px] text-[14px] leading-[18px] text-[#0a6ae8] underline underline-offset-2">Virtual Stock Trading</div>
        <div className="pt-[8px]">{'"Best online Broker" 4 years in a row!\n Barrons 3000-6000.'}</div>
        <div className="pt-[4px] text-[11px] text-[#9ad878]">options Xpress.com</div>
        <div className="pl-[3px] pt-[19px] text-[14px] leading-[18px] text-[#0a6ae8] underline underline-offset-2">Stock Market Investment</div>
        <div className="pt-[4px]">{"$7 trades, no share limit. In depth\n search, no account maintenance"}</div>
        <div className="pt-[3px] text-[11px] text-[#9ad878]">www.stocktrade.com</div>
      </div>
    </div>
  );
}

function Workspace() {
  return (
    <div className="flex min-w-0 grow flex-col">
      <HorizontalRuler />
      <div className="flex min-h-0 grow">
        <VerticalRuler />
        <div className="flex min-w-0 grow flex-col">
          <div className="flex min-h-0 grow">
            <div className="relative grow overflow-hidden bg-[#ededed]"><Page /></div>
            <div className="flex w-[16px] shrink-0 flex-col items-center bg-[#f0f0f0] pb-[6px] pt-[6px]">
              <svg className="h-[4px] w-[7px]" viewBox="0 0 7 4"><path d="M0 4L3.500 0L7 4z" fill="#444" /></svg>
              <div className="mt-[211px] h-[296px] w-[11px] bg-[#c1c1c1]" />
              <svg className="mt-auto h-[4px] w-[7px]" viewBox="0 0 7 4"><path d="M0 0L3.500 4L7 0z" fill="#444" /></svg>
            </div>
          </div>
          <div className="flex h-[15px] shrink-0 items-center bg-[#f0f0f0] pl-[5px] pr-[20px]">
            <svg className="h-[7px] w-[4px]" viewBox="0 0 4 7"><path d="M4 0L0 3.500L4 7z" fill="#444" /></svg>
            <div className="ml-[302px] h-[11px] w-[403px] bg-[#c1c1c1]" />
            <svg className="ml-auto h-[7px] w-[4px]" viewBox="0 0 4 7"><path d="M0 0L4 3.500L0 7z" fill="#444" /></svg>
          </div>
        </div>
      </div>
    </div>
  );
}

/* ---------- Format panel ---------- */

function AlignIcons() {
  const d = "#909090";
  const l = "#cfc9c9";
  return (
    <div className="flex h-[29px] shrink-0 items-center justify-between pl-[9px] pr-[10px] pt-[1px]">
      <svg className="h-[14px] w-[14px]" viewBox="0 0 14 14"><path d="M0.500 1V13" stroke={d} /><rect x="2" y="2" width="6" height="4" fill={l} /><rect x="2" y="7.500" width="11" height="4.500" fill={d} /></svg>
      <svg className="h-[14px] w-[14px]" viewBox="0 0 14 14"><path d="M7 1V14" stroke={d} /><rect x="4" y="3" width="6" height="3.500" fill={l} /><rect x="1.500" y="7.500" width="11" height="4.500" fill={d} /></svg>
      <svg className="h-[14px] w-[14px]" viewBox="0 0 14 14"><path d="M13.500 1V13" stroke={d} /><rect x="6" y="2" width="6" height="4" fill={l} /><rect x="1" y="7.500" width="11" height="4.500" fill={d} /></svg>
      <svg className="h-[14px] w-[14px]" viewBox="0 0 14 14"><path d="M1 1H13" stroke={d} /><rect x="8" y="2" width="4" height="6" fill={l} /><rect x="2" y="2" width="4.500" height="11" fill={d} /></svg>
      <svg className="h-[14px] w-[14px]" viewBox="0 0 14 14"><path d="M1 7.500H14" stroke={d} /><rect x="8" y="4.500" width="4" height="6" fill={l} /><rect x="2.500" y="2" width="4.500" height="11" fill={d} /></svg>
      <svg className="h-[14px] w-[14px]" viewBox="0 0 14 14"><path d="M1 13.500H13" stroke={d} /><rect x="8" y="6" width="4" height="6" fill={l} /><rect x="2.500" y="1" width="4.500" height="11" fill={d} /></svg>
      <svg className="h-[14px] w-[14px]" viewBox="0 0 14 14"><path d="M4 1V14M11 1V14" stroke={d} /><rect x="9" y="4" width="4" height="6" fill={l} /><rect x="2" y="3" width="4" height="9" fill={d} /></svg>
      <svg className="h-[14px] w-[14px]" viewBox="0 0 14 14"><path d="M1 4H14M1 10.500H14" stroke={d} /><rect x="4" y="2" width="6" height="3.500" fill={l} /><rect x="3" y="8.500" width="9" height="4" fill={d} /></svg>
    </div>
  );
}

function Section({ title, muted, extra }: { title: string; muted?: boolean; extra?: string }) {
  return (
    <div className={`flex shrink-0 items-center justify-between border-y border-[#dcdcdc] pl-[10px] pr-[11px] text-[9.800px] ${muted ? "h-[24px] border-b-0 bg-[#ececec] text-[#888]" : "h-[25px] bg-white text-[#555]"}`}>
      <span>{title}</span>
      {extra && <span>{extra}</span>}
    </div>
  );
}

function Combo({ w, children, small }: { w: string; children?: React.ReactNode; small?: boolean }) {
  return (
    <div className={`flex ${w} shrink-0 rounded-[2px] border border-[#b5b5b5] bg-white text-[#999]`}>
      <div className={`flex min-w-0 grow items-center whitespace-nowrap ${small ? "text-[10.500px]" : "text-[13px]"}`}>{children}</div>
      <div className="flex w-[20px] shrink-0 items-center justify-center border-l border-[#b5b5b5] pt-[3px]">
        <svg className="h-[11px] w-[10px]" viewBox="0 0 10 11"><path d="M0 0H10L5 11z" fill="#606060" /></svg>
      </div>
    </div>
  );
}

function ColorField({ w, icon, split }: { w: string; icon: React.ReactNode; split?: boolean }) {
  return (
    <div className={`flex ${w} rounded-[2px] border border-[#b5b5b5] bg-white p-px text-[10px] font-bold text-[#777]`}>
      <div className="flex w-[22px] shrink-0 flex-col items-center justify-center">
        {icon}
        <div className="mt-px h-[2px] w-[13px] bg-[#bdb8b5]" />
      </div>
      <div className="flex grow gap-px">
        {split && <div className="w-1/2 border border-[#c8c8c8]" />}
        <div className="flex grow items-center justify-center border border-[#c8c8c8]">?</div>
      </div>
    </div>
  );
}

function ButtonRow({ h, items }: { h: string; items: React.ReactNode[] }) {
  return (
    <div className={`flex ${h} w-[230px] divide-x divide-[#ccc] rounded-[3px] border border-[#ccc] text-[#333]`}>
      {items.map((it, i) => (
        <div key={i} className="flex flex-1 items-center justify-center">{it}</div>
      ))}
    </div>
  );
}

function StrokeRows() {
  return (
    <>
      <div className="flex h-[25px]"><ColorField w="w-[233px]" icon={<MdEdit className="h-[13px] w-[13px]" />} /></div>
      <div className="mt-[6px] flex h-[25px] gap-[7px]">
        <Combo w="w-[113px]">
          <svg className="ml-[4px] h-[5px] w-[12px]" viewBox="0 0 12 5" fill="#777"><rect y="3" width="1" height="1" /><rect x="2" y="2" width="2" height="2" /><rect x="5" y="1" width="3" height="3" /><rect x="9" y="0.500" width="3" height="4" /></svg>
          <span className="ml-auto mr-[6px] text-[8px] text-[#bbb]">PT</span>
        </Combo>
        <Combo w="w-[113px]">
          <svg className="ml-[3px] h-[10px] w-[13px]" viewBox="0 0 13 10" stroke="#888"><path d="M0.500 1.500H12.500" strokeWidth="1.500" /><path d="M0.500 4.500H12.500" /><path d="M0.500 7H12.500M0.500 9H12.500" strokeDasharray="2 1" /></svg>
          <span className="ml-[3px] pb-px">Solid</span>
        </Combo>
      </div>
    </>
  );
}

function FormatPanel() {
  const ic = "h-[14px] w-[14px]";
  return (
    <div className="flex w-[260px] shrink-0 flex-col border-l border-[#ccc] bg-[#f4f4f4]">
      <AlignIcons />
      <Section title="DEFAULT STYLES" />
      <div className="ml-[13px] mt-[12px] h-[94px] w-[233px] shrink-0 bg-white pl-[13px] pt-[12px] text-[11.600px] leading-[16px] text-[#707070]">
        <div className="font-bold">You're in Default Styles mode.</div>
        <div>Any style you pick now will be applied</div>
        <div>to all new objects you add to the page.</div>
        <div className="mt-[6px] text-[#1a73e0]">Clear default styles</div>
      </div>
      <div className="h-[14px]" />
      <Section title="TEXT" />
      <div className="h-[170px] shrink-0 pl-[13px] pt-[12px]">
        <div className="flex h-[26px] gap-[6px]">
          <Combo w="w-[147px]"><span className="pl-[5px]">Font family</span></Combo>
          <Combo w="w-[80px]" small><span className="pl-[4px]">None</span></Combo>
        </div>
        <div className="mt-[6px] flex h-[25px] gap-[7px]">
          <ColorField w="w-[126px]" icon={<span className="text-[12px] font-normal leading-[13px]">A</span>} />
          <Combo w="w-[100px]">
            <svg className="ml-[4px] h-[10px] w-[11px]" viewBox="0 0 11 10" fill="none" stroke="#666" strokeWidth="1.600"><path d="M4 1H11M7.500 1V9.500M0 4.500H5M2.500 4.500V9.500" /></svg>
            <span className="ml-auto mr-[6px] text-[8px] text-[#bbb]">PX</span>
          </Combo>
        </div>
        <div className="mt-[7px] flex flex-col gap-[7px]">
          <ButtonRow h="h-[22px]" items={[<MdFormatBold className={ic} />, <MdFormatItalic className={ic} />, <MdFormatUnderlined className="h-[13px] w-[13px]" />, <MdFormatStrikethrough className={ic} />]} />
          <ButtonRow h="h-[22px]" items={[<MdFormatAlignLeft className={ic} />, <MdFormatAlignCenter className={ic} />, <MdFormatAlignRight className={ic} />, <MdFormatAlignJustify className={ic} />]} />
          <ButtonRow h="h-[23px]" items={[<MdVerticalAlignTop className={ic} />, <MdVerticalAlignCenter className={ic} />, <MdVerticalAlignBottom className={ic} />, <MdSettings className={ic} />]} />
        </div>
      </div>
      <Section title="FILLS & STROKES" />
      <div className="h-[113px] shrink-0 pl-[13px] pt-[12px]">
        <div className="mb-[6px] flex h-[25px]"><ColorField w="w-[233px]" split icon={<MdFormatColorFill className="h-[12px] w-[13px]" />} /></div>
        <StrokeRows />
      </div>
      <Section title="ROUNDED CORNERS" muted extra="[+]" />
      <Section title="CONNECTORS" />
      <div className="h-[114px] shrink-0 border-b border-[#dcdcdc] pl-[13px] pt-[12px]">
        <StrokeRows />
        <div className="mt-[6.500px] flex h-[25px] gap-[7px]">
          <Combo w="w-[73px]"><span className="pb-px pl-[5px]">Style</span></Combo>
          <Combo w="w-[73px]"><span className="pb-px pl-[5px]">Start</span></Combo>
          <Combo w="w-[73px]"><span className="pb-px pl-[5px]">End</span></Combo>
        </div>
      </div>
    </div>
  );
}

export default function App() {
  return (
    <div className="flex h-[900px] w-[1600px] flex-col overflow-hidden bg-[#f4f4f4] font-['Liberation_Sans',Arial,sans-serif]">
      <TitleBar />
      <div className="flex min-h-0 grow">
        <Launcher />
        <div className="flex min-w-0 grow flex-col">
          <TabStrip />
          <AddressBar />
          <AppToolbar />
          <div className="flex min-h-0 grow">
            <SideNav />
            <Stencils />
            <Workspace />
            <FormatPanel />
          </div>
        </div>
      </div>
    </div>
  );
}
